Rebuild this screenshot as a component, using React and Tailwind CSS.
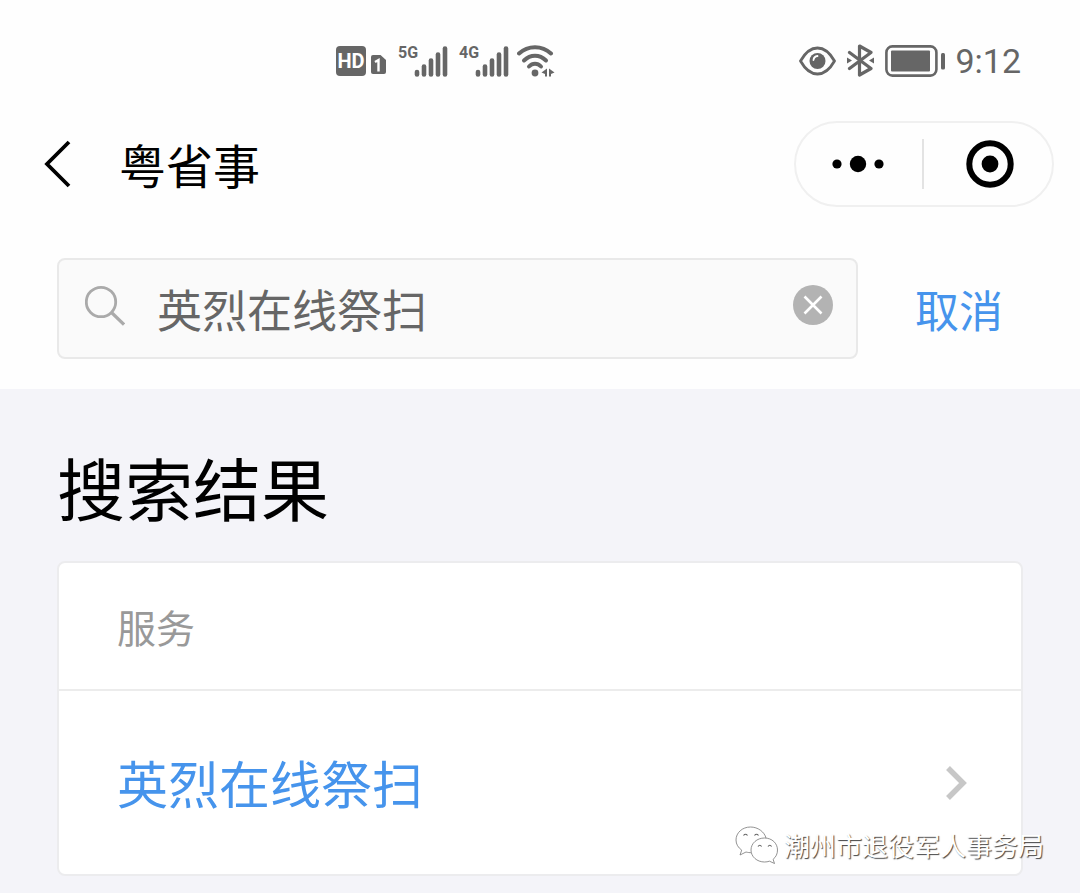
import React, { useState } from "react";

const SIGNAL_BARS = [
  { x: 3, top: 26 },
  { x: 10, top: 20.5 },
  { x: 17, top: 14.5 },
  { x: 24, top: 8.5 },
  { x: 31, top: 2.5 },
];

function Signal({ label }) {
  return (
    <div className="flex h-8 items-start">
      <span className="font-['Roboto',sans-serif] text-base leading-4 font-bold">
        {label}
      </span>
      <svg width="34" height="32" viewBox="0 0 34 32" className="-ml-1 shrink-0" aria-hidden="true">
        {SIGNAL_BARS.map((bar) => (
          <line
            key={bar.x}
            x1={bar.x}
            x2={bar.x}
            y1={bar.top + 1}
            y2="29.5"
            stroke="currentColor"
            strokeWidth="4.6"
            strokeLinecap="round"
          />
        ))}
      </svg>
    </div>
  );
}

function WifiIcon() {
  return (
    <svg width="38" height="32" viewBox="0 0 38 32" fill="none" aria-hidden="true">
      <g stroke="currentColor" strokeWidth="4" strokeLinecap="round">
        <path d="M2 8.500C11 0 25 0 34 8.500" />
        <path d="M7 15.500C13.500 9 22.500 9 29 15.500" />
        <path d="M12 21.500C15.500 17.800 20.500 17.800 24 21.500" />
      </g>
      <circle cx="18" cy="28" r="3.400" fill="currentColor" />
      <path d="M30 23.500v8h-2v-2.500l-3.500-1.500zM32 23.500v8h2v-2.500l3.500-1.500z" fill="currentColor" />
    </svg>
  );
}

function SimIcon() {
  return (
    <svg width="15" height="19" viewBox="0 0 15 19" aria-hidden="true">
      <path d="M2 0h7.500L15 5v12a2 2 0 0 1-2 2H2a2 2 0 0 1-2-2V2a2 2 0 0 1 2-2z" fill="currentColor" />
      <path d="M4 7l3.500-2v11.500" fill="none" stroke="#fff" strokeWidth="2.400" />
    </svg>
  );
}

function EyeIcon() {
  return (
    <svg width="37" height="30" viewBox="0 0 37 30" fill="none" aria-hidden="true">
      <path
        d="M1.500 15C6 7 12 2 18.500 2S31 7 35.500 15C31 23 25 28 18.500 28S6 23 1.500 15z"
        stroke="currentColor"
        strokeWidth="2.800"
        strokeLinejoin="round"
      />
      <circle cx="18.500" cy="15" r="8" fill="currentColor" />
      <path d="M14.500 14a4.500 4.500 0 0 1 4-4" stroke="#fff" strokeWidth="1.800" strokeLinecap="round" />
    </svg>
  );
}

function BluetoothIcon() {
  return (
    <svg width="27" height="33" viewBox="0 0 27 33" fill="none" aria-hidden="true">
      <path
        d="M2.500 8.500L24 24.500 12.500 31V2L24 8.500 2.500 24.500"
        stroke="currentColor"
        strokeWidth="3.200"
        strokeLinejoin="round"
        strokeLinecap="round"
      />
      <path d="M0 13.500l5 3-5 3zM27 13.500l-5 3 5 3z" fill="currentColor" />
    </svg>
  );
}

function BatteryIcon() {
  return (
    <svg width="60" height="32" viewBox="0 0 60 32" fill="none" aria-hidden="true">
      <rect x="1.400" y="1.400" width="50" height="29.200" rx="6" stroke="currentColor" strokeWidth="2.600" />
      <rect x="6" y="5.500" width="39" height="21" rx="1" fill="currentColor" />
      <rect x="56" y="8" width="4" height="16.500" rx="1.500" fill="currentColor" />
    </svg>
  );
}

function StatusBar() {
  return (
    <div className="flex h-[121px] items-center justify-between pr-[59px] pl-[336px] text-[#666]">
      <div className="flex items-center">
        <span className="flex h-[30px] w-[30px] items-center justify-center rounded bg-[#666] font-['Roboto',sans-serif] text-xl font-bold text-white">
          HD
        </span>
        <span className="mt-2 mr-3 ml-[5px]">
          <SimIcon />
        </span>
        <div className="mr-2 flex gap-[11px]">
          <Signal label="5G" />
          <Signal label="4G" />
        </div>
        <WifiIcon />
      </div>
      <div className="flex items-center">
        <EyeIcon />
        <span className="mr-[11px] ml-[11px]">
          <BluetoothIcon />
        </span>
        <BatteryIcon />
        <time className="ml-2.5 font-['Roboto',sans-serif] text-[34px] leading-9">9:12</time>
      </div>
    </div>
  );
}

function Header() {
  return (
    <header className="flex h-[86px] items-center pr-[26px] pl-11">
      <button type="button" aria-label="返回">
        <svg width="27" height="48" viewBox="0 0 27 48" fill="none" className="block">
          <path d="M25 2L3 24l22 22" stroke="#000" strokeWidth="3.800" />
        </svg>
      </button>
      <h1 className="ml-12 text-[47px] leading-[56px]">粤省事</h1>
      <div className="ml-auto flex h-full w-[260px] items-center rounded-full border-2 border-[#f0f0f0]">
        <button type="button" aria-label="更多" className="flex flex-1 justify-center pr-0.5">
          <svg width="54" height="18" viewBox="0 0 54 18">
            <circle cx="6" cy="9" r="4.600" />
            <circle cx="27" cy="9" r="8.200" />
            <circle cx="48" cy="9" r="4.600" />
          </svg>
        </button>
        <span className="h-[50px] w-0.5 bg-[#e3e3e3]" />
        <button type="button" aria-label="关闭" className="flex flex-1 justify-center pl-1">
          <svg width="48" height="48" viewBox="0 0 48 48">
            <circle cx="24" cy="24" r="20.700" fill="none" stroke="#000" strokeWidth="6" />
            <circle cx="24" cy="24" r="8.400" />
          </svg>
        </button>
      </div>
    </header>
  );
}

function SearchForm() {
  const [query, setQuery] = useState("英烈在线祭扫");

  return (
    <form
      onSubmit={(e) => e.preventDefault()}
      className="flex items-center pt-[51px] pr-[77px] pb-[30px] pl-[57px]"
    >
      <div className="flex h-[101px] min-w-0 flex-1 items-center rounded-lg border-2 border-[#e9e9e9] bg-[#fafafa] pr-[23px] pl-[26px]">
        <svg width="40" height="48" viewBox="0 0 40 48" fill="none" className="shrink-0" aria-hidden="true">
          <circle cx="16" cy="17" r="14.700" stroke="#aaa" strokeWidth="2.800" />
          <path d="M26.500 27.500L39 39.500" stroke="#aaa" strokeWidth="3.200" />
        </svg>
        <input
          type="text"
          aria-label="搜索"
          value={query}
          onChange={(e) => setQuery(e.target.value)}
          className="ml-8 h-16 min-w-0 flex-1 bg-transparent text-[45px] text-[#666] outline-none"
        />
        <button type="button" aria-label="清除" onClick={() => setQuery("")} className="mb-2">
          <svg width="40" height="40" viewBox="0 0 40 40" className="block">
            <circle cx="20" cy="20" r="20" fill="#b3b3b3" />
            <path d="M11.500 11.500l17 17M28.500 11.500l-17 17" stroke="#fff" strokeWidth="2.600" />
          </svg>
        </button>
      </div>
      <button type="button" className="ml-[57px] text-[44px] leading-[64px] text-[#4694ec]">
        取消
      </button>
    </form>
  );
}

function Results() {
  return (
    <main className="flex-1 bg-[#f4f4f9] px-[57px] pt-[50px]">
      <h2 className="text-[68px] leading-[96px]">搜索结果</h2>
      <section className="mt-[26px] rounded-lg border-2 border-[#ececee] bg-white">
        <h3 className="flex h-[126px] items-center px-[58px] text-[39px] text-[#999]">服务</h3>
        <a
          href="#service"
          className="flex h-[185px] items-center justify-between border-t-2 border-[#ececec] pr-[54px] pl-[58px] text-[51px] text-[#4694ec]"
        >
          英烈在线祭扫
          <svg width="22" height="36" viewBox="0 0 22 36" fill="none" aria-hidden="true">
            <path d="M3 3l15 15L3 33" stroke="#c7c7c7" strokeWidth="5.500" />
          </svg>
        </a>
      </section>
    </main>
  );
}

function Watermark() {
  return (
    <div className="absolute right-9 bottom-[29px] flex items-center gap-1.5 text-[26px] leading-9 text-white [text-shadow:1px_1px_1px_#444]">
      <svg width="43" height="38" viewBox="0 0 43 38" fill="#fff" stroke="#777" strokeWidth="0.8" aria-hidden="true">
        <path d="M15.500 1C7.300 1 1 6.800 1 14c0 4.200 2.200 7.700 5.700 10.100L5 29l6-3c1.800.5 3.500.7 6 .7L31 13C29.500 6 23 1 15.500 1z" stroke="none" />
        <path d="M31 12C29.500 6 23 1 15.500 1C7.300 1 1 6.800 1 14c0 4.200 2.200 7.700 5.700 10.100L5 29l6-3c1.800.5 3.500.7 6 .7" fill="none" />
        <path d="M29.500 12C22 12 16 17.300 16 24s6 12 13.500 12c1.800 0 3.400-.3 5-.8l5 2.300-1.400-4.200c2.900-2.200 4.400-5.600 4.400-9.300 0-6.700-5.500-12-13-12z" />
        <path
          d="M8.500 9.500q2-2.500 4 0M19.500 9.500q2-2.500 4 0M23 20.500q1.800-2.500 3.600 0M33 20.500q1.800-2.500 3.600 0"
          fill="none"
          stroke="#666"
          strokeWidth="1.200"
        />
      </svg>
      <span>潮州市退役军人事务局</span>
    </div>
  );
}

export default function App() {
  return (
    <div className="relative flex min-h-screen flex-col bg-[#fefefe] font-['Noto_Sans_CJK_SC',sans-serif] text-black">
      <StatusBar />
      <Header />
      <SearchForm />
      <Results />
      <Watermark />
    </div>
  );
}
